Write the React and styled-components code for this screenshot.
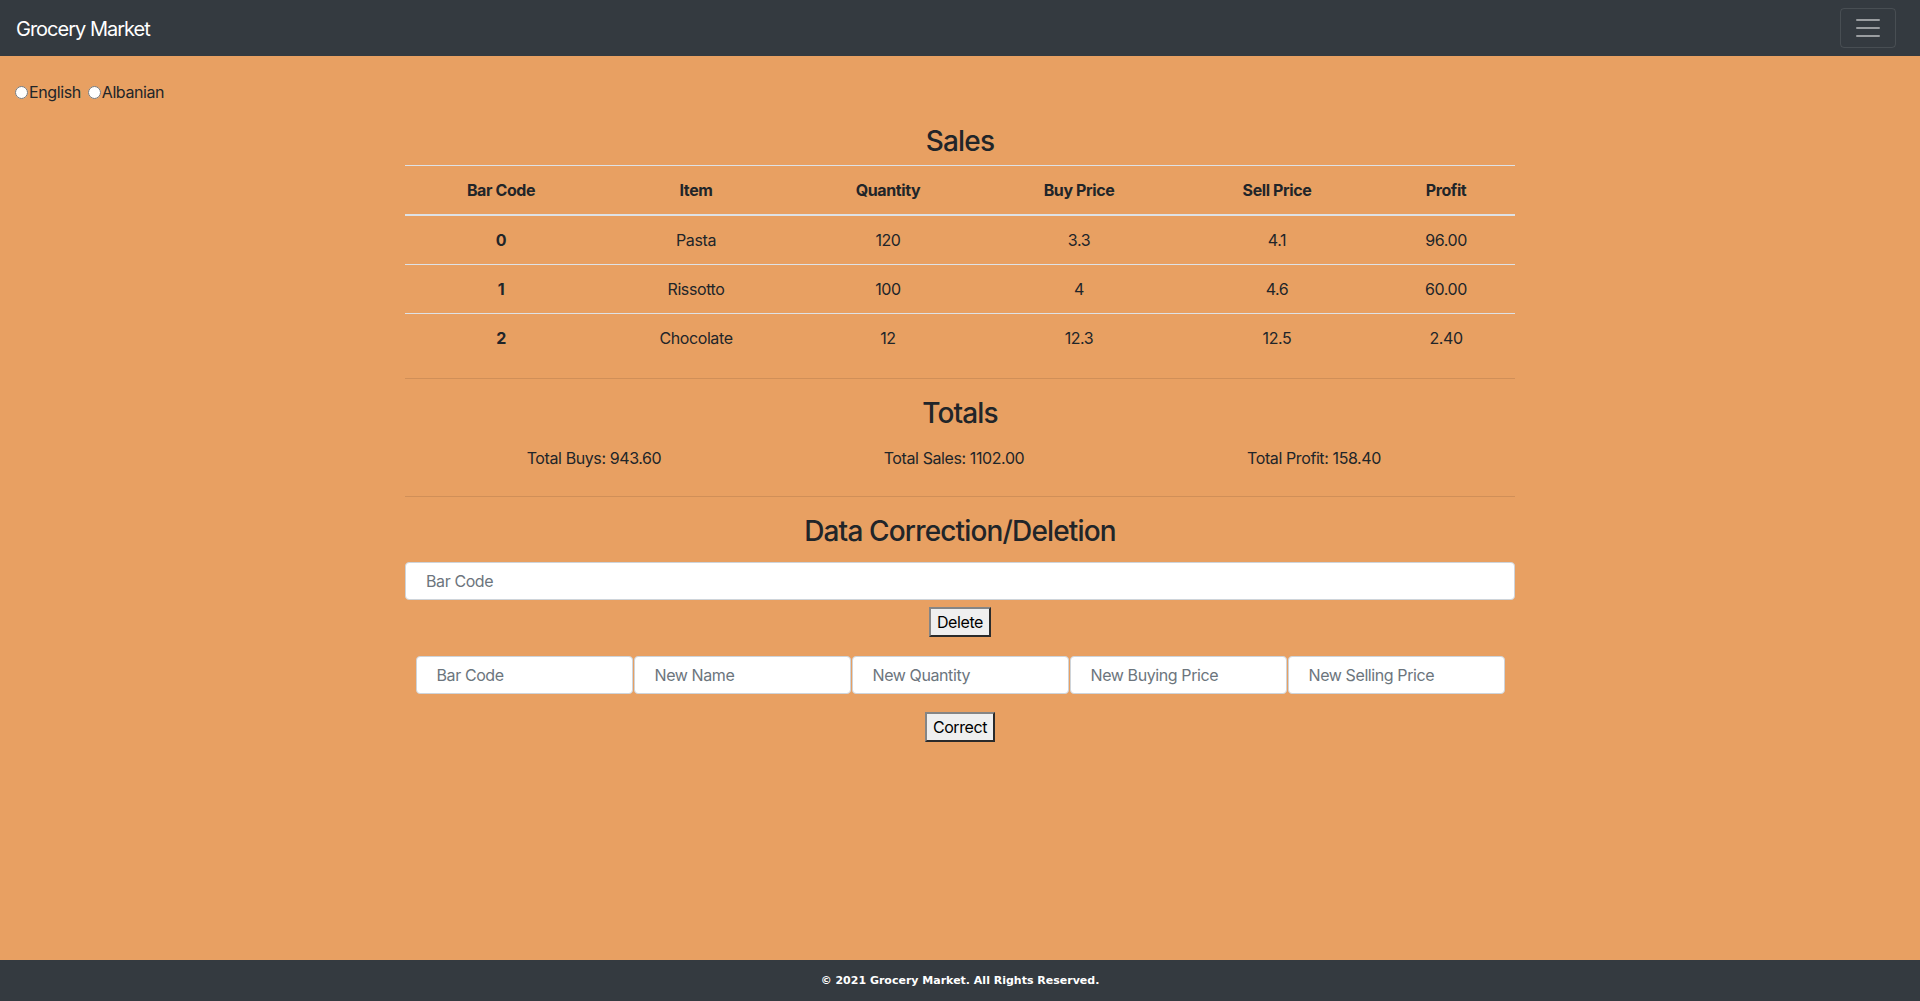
import React from "react";
import styled, { createGlobalStyle } from "styled-components";

const GlobalStyle = createGlobalStyle`
  html, body { margin: 0; padding: 0; }
  body {
    background: #e8a062;
    color: #212529;
    font-family: Inter, "Noto Sans", sans-serif;
    font-size: 16px;
    line-height: 1.5;
    letter-spacing: -0.025em;
  }
  * { box-sizing: border-box; }
`;

const Page = styled.div`
  min-height: 100vh;
  display: flex;
  flex-direction: column;
`;

const NavBar = styled.nav`
  height: 56px;
  background: #343a40;
  display: flex;
  align-items: center;
  justify-content: space-between;
  padding: 0 24px 0 16px;
`;

const Brand = styled.a`
  color: #fff;
  font-size: 20px;
  line-height: 30px;
  text-decoration: none;
  letter-spacing: -0.05em;
  margin-top: 2px;
`;

const Toggler = styled.button`
  width: 56px;
  height: 40px;
  background: transparent;
  border: 1px solid rgba(255, 255, 255, 0.1);
  border-radius: 4px;
  display: flex;
  align-items: center;
  justify-content: center;
  padding: 0;
`;

const Main = styled.main`
  flex: 1;
`;

const LangBar = styled.div`
  display: flex;
  align-items: center;
  padding: 24px 15px 0;
  line-height: 24px;
  gap: 7px;
`;

const LangLabel = styled.label`
  display: flex;
  align-items: center;
  font-size: 16px;
  color: #212529;
`;

const Radio = styled.input`
  width: 13px;
  height: 13px;
  margin: 0 1px 0 0;
`;

const Container = styled.div`
  width: 1110px;
  margin: 0 auto;
`;

const Heading = styled.h3`
  font-size: 28px;
  font-weight: 500;
  line-height: 1.2;
  letter-spacing: -0.03em;
  text-align: center;
  padding-top: 2px;
  margin: ${(p) => p.$mt || 0}px 0 ${(p) => p.$mb || 6}px;
`;

const Table = styled.table`
  width: 100%;
  border-collapse: collapse;
  margin-bottom: 16px;
  color: #212529;
`;

const Th = styled.th`
  padding: 12px;
  text-align: center;
  font-weight: 700;
  border-top: 1px solid #dee2e6;
  border-bottom: 2px solid #dee2e6;
  width: ${(p) => p.$w}px;
`;

const Td = styled.td`
  padding: 12px;
  text-align: center;
  border-top: 1px solid #dee2e6;
  font-weight: ${(p) => (p.$bold ? 700 : 400)};
`;

const Rule = styled.hr`
  border: 0;
  border-top: 1px solid rgba(0, 0, 0, 0.1);
  margin: 16px 0;
`;

const TotalsRow = styled.div`
  display: grid;
  grid-template-columns: repeat(3, 360px);
  justify-content: center;
  margin: 16px 12px 26px 0;
  text-align: center;
`;

const TotalItem = styled.span`
  font-size: 16px;
`;

const TextInput = styled.input`
  display: block;
  width: ${(p) => (p.$w ? `${p.$w}px` : "100%")};
  height: 38px;
  padding: 6px 20px;
  font-family: inherit;
  font-size: 16px;
  letter-spacing: -0.025em;
  color: #495057;
  background: #fff;
  border: 1px solid #ced4da;
  border-radius: 4px;
  &::placeholder { color: #6c757d; }
`;

const BtnRow = styled.div`
  display: flex;
  justify-content: center;
  margin-top: ${(p) => p.$mt}px;
`;

const NativeButton = styled.button`
  font-family: Inter, "Noto Sans", sans-serif;
  font-size: 16px;
  line-height: 24px;
  letter-spacing: -0.025em;
  padding: 1px 6px;
  color: #000;
  background: #efefef;
  border: 2px solid;
  border-color: #858585 #2b2b2b #2b2b2b #858585;
  border-radius: 0;
`;

const InputRow = styled.div`
  display: flex;
  justify-content: center;
  gap: 1px;
  margin-top: ${(p) => p.$mt}px;
`;

const Footer = styled.footer`
  height: 41px;
  background: #343a40;
  color: #fff;
  display: flex;
  align-items: center;
  justify-content: center;
  font-family: "DejaVu Sans", Verdana, sans-serif;
  font-size: 11px;
  font-weight: 700;
  letter-spacing: normal;
  padding-top: 1px;
`;

const rows = [
  ["0", "Pasta", "120", "3.3", "4.1", "96.00"],
  ["1", "Rissotto", "100", "4", "4.6", "60.00"],
  ["2", "Chocolate", "12", "12.3", "12.5", "2.40"],
];

const cols = [
  ["Bar Code", 192],
  ["Item", 198],
  ["Quantity", 186],
  ["Buy Price", 196],
  ["Sell Price", 200],
  ["Profit", 138],
];

function Hamburger() {
  return (
    <svg width="30" height="30" viewBox="0 0 30 30">
      <path
        d="M4 7h22M4 15h22M4 23h22"
        stroke="rgba(255,255,255,0.5)"
        strokeWidth="2"
        strokeLinecap="round"
      />
    </svg>
  );
}

export default function App() {
  return (
    <Page>
      <GlobalStyle />
      <NavBar>
        <Brand href="#">Grocery Market</Brand>
        <Toggler aria-label="Toggle navigation">
          <Hamburger />
        </Toggler>
      </NavBar>
      <Main>
        <LangBar>
          <LangLabel>
            <Radio type="radio" name="lang" />
            English
          </LangLabel>
          <LangLabel>
            <Radio type="radio" name="lang" />
            Albanian
          </LangLabel>
        </LangBar>
        <Container>
          <Heading $mt={19}>Sales</Heading>
          <Table>
            <thead>
              <tr>
                {cols.map(([c, w]) => (
                  <Th key={c} $w={w}>
                    {c}
                  </Th>
                ))}
              </tr>
            </thead>
            <tbody>
              {rows.map((r) => (
                <tr key={r[0]}>
                  {r.map((v, i) => (
                    <Td key={i} $bold={i === 0}>
                      {v}
                    </Td>
                  ))}
                </tr>
              ))}
            </tbody>
          </Table>
          <Rule />
          <Heading>Totals</Heading>
          <TotalsRow>
            <TotalItem>Total Buys: 943.60</TotalItem>
            <TotalItem>Total Sales: 1102.00</TotalItem>
            <TotalItem>Total Profit: 158.40</TotalItem>
          </TotalsRow>
          <Rule />
          <Heading $mb={13}>Data Correction/Deletion</Heading>
          <TextInput placeholder="Bar Code" />
          <BtnRow $mt={7}>
            <NativeButton>Delete</NativeButton>
          </BtnRow>
        </Container>
        <InputRow $mt={19}>
          <TextInput $w={217} placeholder="Bar Code" />
          <TextInput $w={217} placeholder="New Name" />
          <TextInput $w={217} placeholder="New Quantity" />
          <TextInput $w={217} placeholder="New Buying Price" />
          <TextInput $w={217} placeholder="New Selling Price" />
        </InputRow>
        <BtnRow $mt={18}>
          <NativeButton>Correct</NativeButton>
        </BtnRow>
      </Main>
      <Footer>© 2021 Grocery Market. All Rights Reserved.</Footer>
    </Page>
  );
}
